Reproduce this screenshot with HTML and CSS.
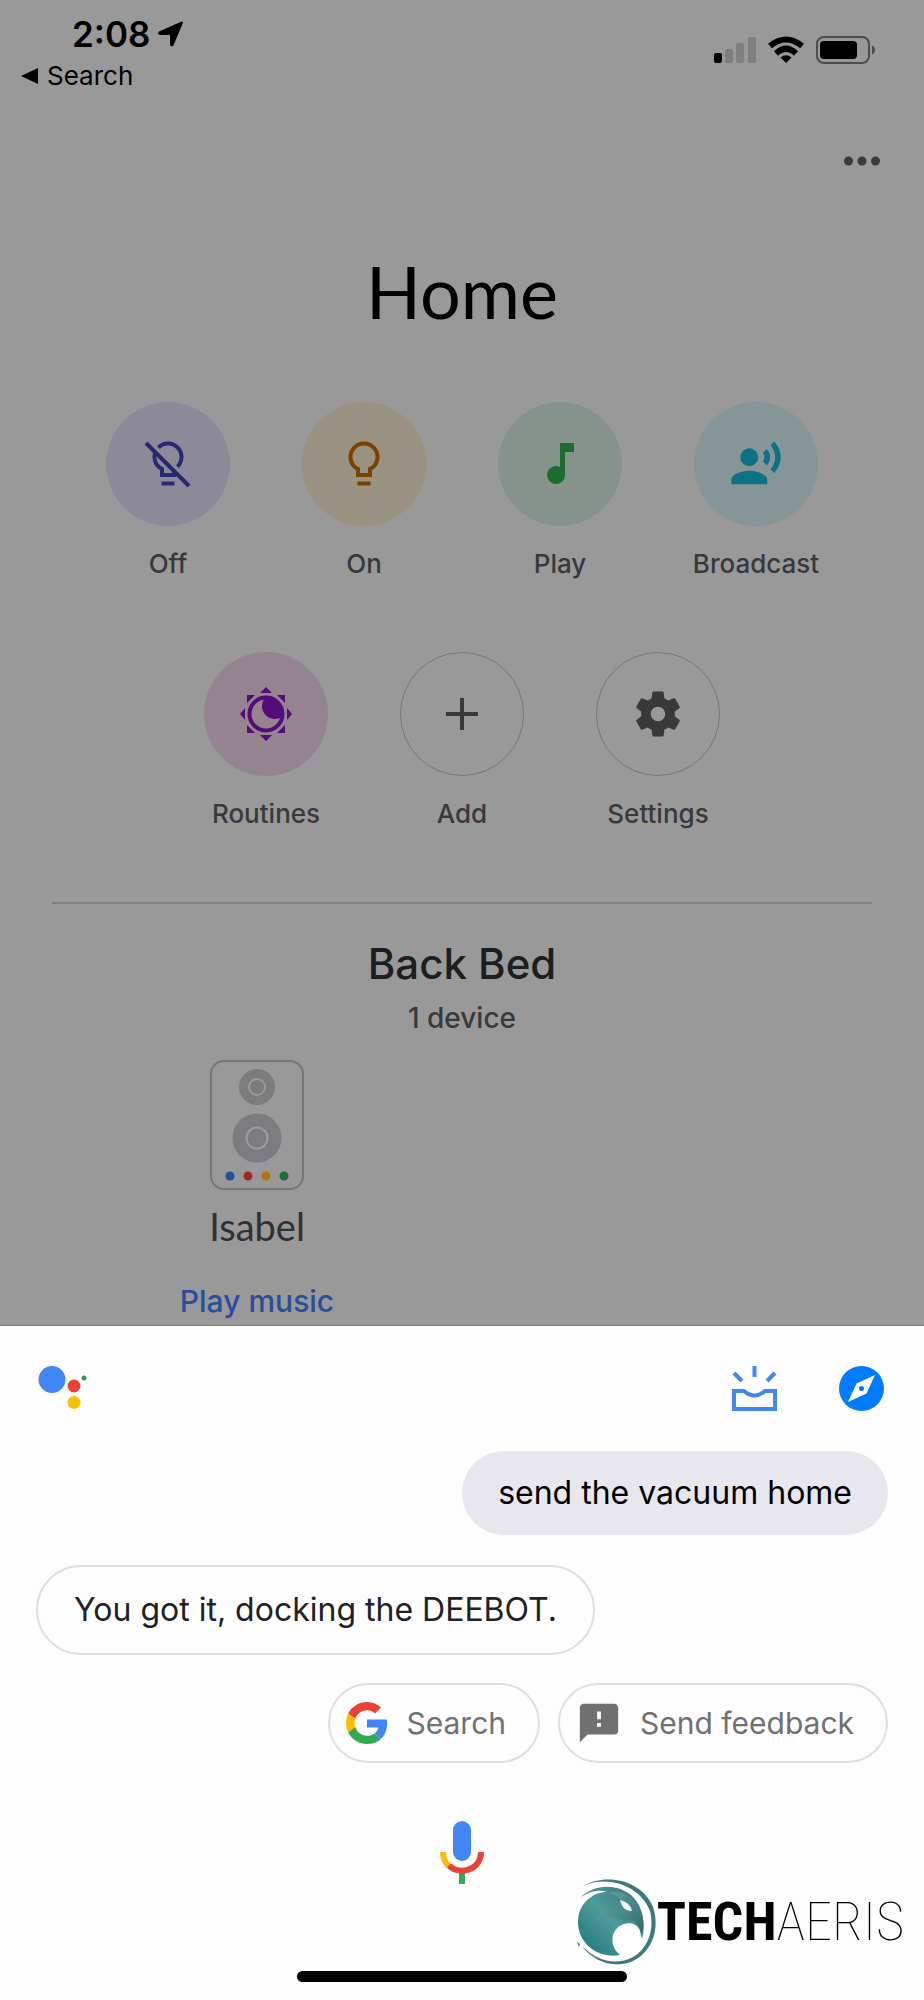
FILE: index.html
```html
<!DOCTYPE html>
<html lang="en">
<head>
    <meta charset="UTF-8">
    <meta name="viewport" content="width=device-width, initial-scale=1.0">
    <title>Home</title>
    <link rel="stylesheet" href="styles.css">
</head>
<body>
    <main class="home">
        <header class="status-bar">
            <div class="status-left">
                <div class="clock">
                    <span>2:08</span>
                    <svg width="26" height="26" viewBox="0 0 26 26" aria-hidden="true"><path d="M24 1.500L14.500 24q-1 1-1.500-.5V13H2q-1.500-.5-.5-1.500z" fill="#000" stroke="#000" stroke-width="2" stroke-linejoin="round"/></svg>
                </div>
                <a href="#" class="back-link">
                    <svg width="18" height="16" viewBox="0 0 18 16" aria-hidden="true"><path d="M17 0v16L0 8z"/></svg>
                    Search
                </a>
            </div>
            <div class="status-right">
                <svg width="42" height="28" viewBox="0 0 42 28" aria-hidden="true">
                    <rect x="0" y="17" width="8" height="10" rx="2"/>
                    <g fill="#7f7f7f">
                        <rect x="11" y="13" width="8" height="14" rx="2"/>
                        <rect x="22" y="7" width="8" height="20" rx="2"/>
                        <rect x="34" y="1" width="8" height="26" rx="2"/>
                    </g>
                </svg>
                <svg width="36" height="28" viewBox="0 0 36 28" aria-hidden="true">
                    <g fill="none" stroke="#000" stroke-width="6">
                        <path d="M2 10Q18-3 34 10"/>
                        <path d="M8 17.500Q18 8 28 17.500"/>
                    </g>
                    <path d="M12.500 21.500q5.500-4.500 11 0L18 27z"/>
                </svg>
                <svg width="60" height="28" viewBox="0 0 60 28" aria-hidden="true">
                    <rect x="1" y="1" width="52" height="26" rx="7" fill="none" stroke="#4c4c4c" stroke-width="2"/>
                    <rect x="4" y="5" width="37" height="18" rx="4"/>
                    <path d="M56 9.500q3 1.500 3 4.500t-3 4.500z" fill="#4c4c4c"/>
                </svg>
            </div>
        </header>

        <div class="toolbar">
            <button type="button" class="more" aria-label="More">
                <svg width="36" height="10" viewBox="0 0 36 10"><g fill="#3a3b3d"><circle cx="4.500" cy="5" r="4.500"/><circle cx="18" cy="5" r="4.500"/><circle cx="31.500" cy="5" r="4.500"/></g></svg>
            </button>
        </div>

        <h1>Home</h1>

        <div class="actions">
            <button type="button" class="action">
                <span class="disc disc-off">
                    <svg width="48" height="48" viewBox="0 0 48 48" fill="none" stroke="#2a2874" stroke-width="4">
                        <path d="M18 35V29A13.500 13.500 0 1 1 30 29V35z"/>
                        <path d="M17.500 43.500h13"/>
                        <path d="M5 1L47 43" stroke="#8c8a99"/>
                        <path d="M2 3L45 46"/>
                    </svg>
                </span>
                Off
            </button>
            <button type="button" class="action">
                <span class="disc disc-on">
                    <svg width="48" height="48" viewBox="0 0 48 48" fill="none" stroke="#7a4200" stroke-width="4">
                        <path d="M18 35V29A13.500 13.500 0 1 1 30 29V35z"/>
                        <path d="M17.500 43.500h13"/>
                    </svg>
                </span>
                On
            </button>
            <button type="button" class="action">
                <span class="disc disc-play">
                    <svg width="48" height="48" viewBox="0 0 48 48"><path d="M24 3h14v9h-9v23a9 9 0 1 1-5-8z" fill="#1d6d33"/></svg>
                </span>
                Play
            </button>
            <button type="button" class="action">
                <span class="disc disc-broadcast">
                    <svg width="54" height="54" viewBox="0 0 24 24" fill="#0c7285">
                        <circle cx="9" cy="9" r="4"/>
                        <path d="M9 15c-2.670 0-8 1.340-8 4v2h16v-2c0-2.660-5.330-4-8-4z"/>
                        <path d="M16.760 5.360l-1.680 1.690c.84 1.180.84 2.710 0 3.890l1.680 1.690c2.020-2.020 2.020-5.070 0-7.270zM20.070 2l-1.630 1.630c2.770 3.020 2.770 7.560 0 10.740L20.070 16c3.900-3.890 3.910-9.950 0-14z"/>
                    </svg>
                </span>
                Broadcast
            </button>
            <button type="button" class="action">
                <span class="disc disc-routines">
                    <svg width="54" height="54" viewBox="-27 -27 54 54" fill="#570a79">
                        <clipPath id="moon"><circle r="15"/></clipPath>
                        <circle r="16.500" fill="none" stroke="#570a79" stroke-width="4"/>
                        <circle cx="9" cy="-8" r="13" clip-path="url(#moon)"/>
                        <path d="M0-27l6 6H-6zM0 27l6-6H-6zM-26 0l5-6V6zM26 0l-5-6V6z"/>
                        <path d="M19-19v8l-8-8zM-19-19v8l8-8zM19 19v-8l-8 8zM-19 19v-8l8 8z"/>
                    </svg>
                </span>
                Routines
            </button>
            <button type="button" class="action">
                <span class="disc disc-outline">
                    <svg width="32" height="32" viewBox="0 0 32 32"><path d="M16 0v32M0 16h32" stroke="#38393b" stroke-width="4"/></svg>
                </span>
                Add
            </button>
            <button type="button" class="action">
                <span class="disc disc-outline">
                    <svg width="54" height="54" viewBox="0 0 24 24"><path fill="#38393b" d="M19.430 12.980c.04-.32.07-.64.07-.98s-.03-.66-.07-.98l2.110-1.650c.19-.15.24-.42.12-.64l-2-3.460c-.12-.22-.39-.3-.61-.22l-2.490 1c-.52-.4-1.080-.73-1.690-.98l-.38-2.650C14.460 2.180 14.250 2 14 2h-4c-.25 0-.46.18-.49.42l-.38 2.650c-.61.25-1.170.59-1.690.98l-2.490-1c-.23-.09-.49 0-.61.22l-2 3.460c-.13.22-.07.49.12.64l2.110 1.650c-.04.32-.07.65-.07.98s.03.66.07.98l-2.110 1.650c-.19.15-.24.42-.12.64l2 3.460c.12.22.39.3.61.22l2.490-1c.52.4 1.080.73 1.690.98l.38 2.650c.03.24.24.42.49.42h4c.25 0 .46-.18.49-.42l.38-2.650c.61-.25 1.170-.59 1.690-.98l2.490 1c.23.09.49 0 .61-.22l2-3.460c.12-.22.07-.49-.12-.64l-2.110-1.650zM12 15.200c-1.770 0-3.200-1.430-3.200-3.200s1.430-3.200 3.200-3.200 3.200 1.430 3.200 3.200-1.430 3.200-3.200 3.200z"/></svg>
                </span>
                Settings
            </button>
        </div>

        <section class="room">
            <h2>Back Bed</h2>
            <p class="device-count">1 device</p>
            <div class="devices">
                <article class="device">
                    <svg width="94" height="130" viewBox="0 0 94 130" aria-hidden="true">
                        <rect x="1" y="1" width="92" height="128" rx="13" fill="none" stroke="#777" stroke-width="2"/>
                        <circle cx="47" cy="27" r="18" fill="#7c7c7d"/>
                        <circle cx="47" cy="27" r="8" fill="none" stroke="#999" stroke-width="2"/>
                        <circle cx="47" cy="78" r="24.500" fill="#7c7c80"/>
                        <circle cx="47" cy="78" r="10.500" fill="none" stroke="#9a9a9f" stroke-width="2"/>
                        <circle cx="20" cy="116" r="4.500" fill="#2750a0"/>
                        <circle cx="38" cy="116" r="4.500" fill="#a12b20"/>
                        <circle cx="56" cy="116" r="4.500" fill="#a97c0b"/>
                        <circle cx="74" cy="116" r="4.500" fill="#226b3e"/>
                    </svg>
                    <h3>Isabel</h3>
                    <button type="button" class="play-music">Play music</button>
                </article>
            </div>
        </section>
    </main>

    <section class="assistant">
        <header class="assistant-bar">
            <svg width="50" height="45" viewBox="0 0 50 45" aria-hidden="true">
                <circle cx="14" cy="13.500" r="13.500" fill="#4285f4"/>
                <circle cx="36" cy="20" r="6.500" fill="#ea4335"/>
                <circle cx="36" cy="36.500" r="6.500" fill="#fbbc05"/>
                <circle cx="46" cy="12" r="2.500" fill="#2b9a5a"/>
            </svg>
            <div class="assistant-tools">
                <button type="button" aria-label="Updates">
                    <svg width="45" height="45" viewBox="0 0 45 45" fill="none" stroke="#4285f4" stroke-width="4">
                        <path d="M2 25h10q10.500 9 21 0h10v18H2z"/>
                        <path d="M22.500 0v11M2 7l8 8M43 7l-8 8"/>
                    </svg>
                </button>
                <button type="button" aria-label="Explore">
                    <svg width="45" height="45" viewBox="0 0 45 45">
                        <circle cx="22.500" cy="22.500" r="22.500" fill="#007bfe"/>
                        <path d="M9 36l8.500-18.500L36 9l-8.500 18.500z" fill="#fff"/>
                        <circle cx="22.500" cy="22.500" r="2.500" fill="#007bfe"/>
                    </svg>
                </button>
            </div>
        </header>

        <p class="bubble bubble-user">send the vacuum home</p>
        <p class="bubble bubble-reply">You got it, docking the DEEBOT.</p>

        <div class="chips">
            <button type="button" class="chip">
                <svg width="42" height="42" viewBox="0 0 48 48">
                    <path fill="#ea4335" d="M24 9.500c3.540 0 6.710 1.220 9.210 3.600l6.850-6.850C35.900 2.380 30.470 0 24 0 14.620 0 6.510 5.380 2.560 13.220l7.980 6.190C12.430 13.720 17.740 9.500 24 9.500z"/>
                    <path fill="#4285f4" d="M46.980 24.550c0-1.570-.15-3.090-.38-4.550H24v9.020h12.940c-.58 2.960-2.260 5.480-4.780 7.180l7.730 6c4.510-4.180 7.090-10.360 7.090-17.650z"/>
                    <path fill="#fbbc05" d="M10.530 28.590c-.48-1.450-.76-2.990-.76-4.590s.27-3.140.76-4.590l-7.980-6.190C.92 16.460 0 20.120 0 24c0 3.880.92 7.540 2.560 10.780l7.970-6.190z"/>
                    <path fill="#34a853" d="M24 48c6.480 0 11.930-2.130 15.890-5.810l-7.730-6c-2.150 1.450-4.920 2.300-8.160 2.300-6.260 0-11.570-4.220-13.470-9.910l-7.980 6.190C6.510 42.620 14.620 48 24 48z"/>
                </svg>
                Search
            </button>
            <button type="button" class="chip">
                <svg width="46" height="46" viewBox="0 0 24 24"><path fill="#707070" d="M20 2H4c-1.100 0-1.990.9-1.990 2L2 22l4-4h14c1.100 0 2-.9 2-2V4c0-1.100-.9-2-2-2zm-7 12h-2v-2h2v2zm0-4h-2V6h2v4z"/></svg>
                Send feedback
            </button>
        </div>

        <button type="button" class="mic" aria-label="Speak">
            <svg width="44" height="64" viewBox="0 0 44 64" fill="none" stroke-width="6">
                <rect x="13" y="0" width="18" height="40" rx="9" fill="#4285f4"/>
                <path d="M22 52v11" stroke="#34a853"/>
                <path d="M3 31q0 9 6 14" stroke="#fbbc05"/>
                <path d="M9 44.500C20 55 41 49 41 31" stroke="#ea4335"/>
            </svg>
        </button>
        <div class="home-indicator"></div>

        <div class="watermark">
            <svg width="80" height="86" viewBox="0 0 80 86" aria-hidden="true">
                <defs>
                    <linearGradient id="orb" x1="0" y1="1" x2="1" y2="0">
                        <stop offset="0" stop-color="#1c7279"/>
                        <stop offset=".5" stop-color="#4d9c9b"/>
                        <stop offset="1" stop-color="#3f6f73"/>
                    </linearGradient>
                    <linearGradient id="crest" x1="0" y1="0" x2="1" y2="1">
                        <stop offset="0" stop-color="#7cb3ae"/>
                        <stop offset="1" stop-color="#1e5f65"/>
                    </linearGradient>
                </defs>
                <circle cx="38" cy="43" r="38" fill="#fff"/>
                <path d="M6 7C30-7 66 2 76 28c9 27-6 54-31 57-17 2-31-6-40-18 12 12 25 17 39 15 22-3 35-26 29-50C64 8 32-5 6 7z" fill="#40797a"/>
                <path d="M3 19C17 4 43 4 57 19c9 10 12 26 8 42 0-14-9-19-18-16-13 4-16 21-4 31C23 80 1 66 1 43c0-10 4-17 9-22 7-6 13-8 20-8-9-3-19 0-27 6z" fill="url(#orb)"/>
                <path d="M13 47c9-9 25-12 35-5 10-4 16 5 16 17 5-13 2-27-6-37-8-8-17-10-26-9 13 6 18 14 17 22-11-5-28-2-36 12z" fill="url(#crest)" opacity=".75"/>
                <path d="M43 21q11 3 12 11-9 1-12-11z" fill="#fff"/>
                <path d="M0 63l3 2-1 3z" fill="#40797a"/>
            </svg>
            <span class="wordmark"><b>TECH</b><span>AERIS</span></span>
        </div>
    </section>
</body>
</html>
```
FILE: styles.css
```css
* {
    box-sizing: border-box;
}
body {
    font-family: Inter, "Liberation Sans", sans-serif;
    background-color: #fdfdfd;
    color: #000;
    margin: 0;
    min-height: 100vh;
}
h1, h2, h3, p {
    margin: 0;
}
svg {
    display: block;
    flex: none;
}
button {
    padding: 0;
    border: none;
    background: none;
    color: inherit;
    font-family: inherit;
    cursor: pointer;
}

/* dimmed home screen */
.home {
    background-color: #999;
    border-bottom: 1px solid #7c7c7c;
    padding-bottom: 4px;
}
.status-bar {
    display: flex;
    justify-content: space-between;
    padding: 12px 48px 0 21px;
}
.clock {
    display: flex;
    align-items: center;
    gap: 8px;
    padding-left: 51px;
    font-size: 35px;
    font-weight: 600;
    line-height: 44px;
}
.back-link {
    display: flex;
    align-items: center;
    gap: 8px;
    margin-top: 4px;
    color: #000;
    font-size: 26px;
    line-height: 32px;
    text-decoration: none;
}
.status-right {
    display: flex;
    gap: 12px;
    padding-top: 24px;
}
.toolbar {
    display: flex;
    justify-content: flex-end;
    padding: 47px 44px 0;
}
.more {
    display: flex;
    align-items: center;
    height: 44px;
}
h1 {
    margin-top: 64px;
    font-family: Lato, sans-serif;
    font-size: 72px;
    font-weight: 400;
    line-height: 88px;
    text-align: center;
}
.actions {
    display: flex;
    flex-wrap: wrap;
    justify-content: center;
    gap: 72px 0;
    max-width: 800px;
    margin: 67px auto 0;
}
.action {
    display: flex;
    flex-direction: column;
    align-items: center;
    gap: 22px;
    width: 196px;
    color: #38393b;
    font-size: 26px;
    font-weight: 500;
    line-height: 32px;
}
.disc {
    display: flex;
    align-items: center;
    justify-content: center;
    width: 124px;
    height: 124px;
    border-radius: 50%;
}
.disc-off {
    background-color: #8c8a99;
}
.disc-on {
    background-color: #999280;
}
.disc-play {
    background-color: #85938c;
}
.disc-broadcast {
    background-color: #869697;
}
.disc-routines {
    background-color: #938490;
}
.disc-outline {
    border: 1px solid #777;
}
.room {
    margin: 72px 52px 0;
    padding-top: 36px;
    border-top: 2px solid #828282;
    text-align: center;
}
h2 {
    color: #1d1e20;
    font-size: 42px;
    font-weight: 500;
    line-height: 48px;
}
.device-count {
    margin-top: 14px;
    color: #38393b;
    font-size: 28px;
    font-weight: 500;
    line-height: 32px;
}
.devices {
    display: grid;
    grid-template-columns: 1fr 1fr;
    margin-top: 26px;
}
.device {
    display: flex;
    flex-direction: column;
    align-items: center;
}
h3 {
    margin-top: 14px;
    color: #303133;
    font-family: Lato, sans-serif;
    font-size: 38px;
    font-weight: 400;
    line-height: 44px;
}
.play-music {
    margin-top: 33px;
    color: #284f9c;
    font-size: 30px;
    font-weight: 500;
    line-height: 40px;
}

/* assistant sheet */
.assistant {
    position: relative;
    display: flex;
    flex-direction: column;
    padding: 40px 36px 18px;
}
.assistant-bar {
    display: flex;
    justify-content: space-between;
    padding: 0 4px 0 2px;
}
.assistant-tools {
    display: flex;
    gap: 62px;
}
.bubble {
    border-radius: 45px;
    padding: 0 36px;
    font-size: 32px;
}
.bubble-user {
    align-self: flex-end;
    margin-top: 40px;
    background-color: #e8e7ed;
    line-height: 84px;
}
.bubble-reply {
    align-self: flex-start;
    margin-top: 30px;
    border: 2px solid #dfdfe1;
    color: #202124;
    line-height: 86px;
}
.chips {
    display: flex;
    justify-content: flex-end;
    gap: 18px;
    margin-top: 28px;
}
.chip {
    display: flex;
    align-items: center;
    gap: 18px;
    height: 80px;
    padding: 0 32px 0 16px;
    border: 2px solid #dfdfe1;
    border-radius: 40px;
    color: #707070;
    font-size: 30px;
}
.mic {
    align-self: center;
    margin-top: 58px;
}
.home-indicator {
    align-self: center;
    width: 330px;
    height: 11px;
    margin-top: 86px;
    border-radius: 6px;
    background-color: #000;
}
.watermark {
    position: absolute;
    right: 20px;
    bottom: 35px;
    display: flex;
    align-items: center;
}
.wordmark {
    display: flex;
    align-items: baseline;
    font-family: "Roboto Condensed", "Liberation Sans Narrow", Roboto, sans-serif;
    font-size: 54px;
    line-height: 60px;
}
.wordmark span {
    font-weight: 100;
}
```
